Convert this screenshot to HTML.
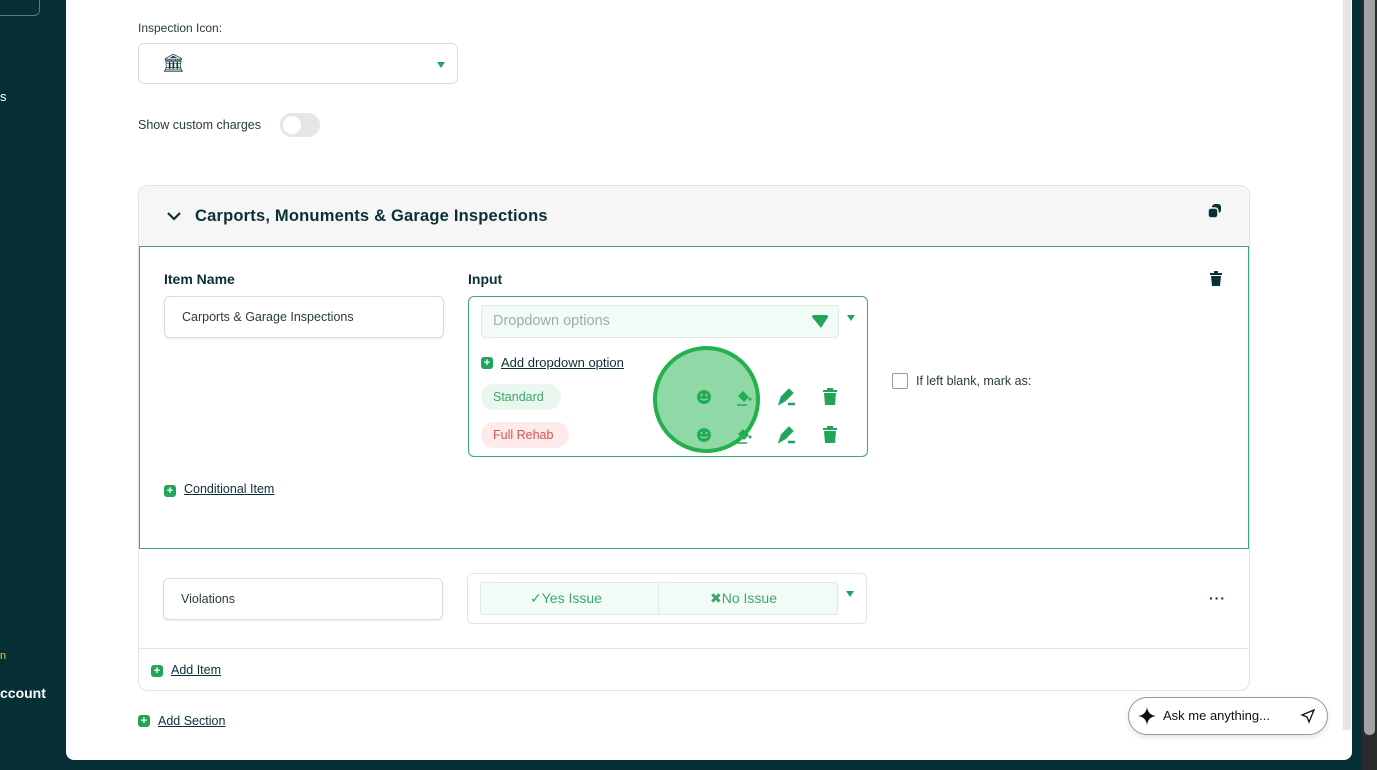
<!DOCTYPE html>
<html><head><meta charset="utf-8"><style>
*{box-sizing:border-box;margin:0;padding:0}
body{width:1377px;height:770px;overflow:hidden;background:#062f36;font-family:"Liberation Sans",sans-serif;position:relative;color:#0b2f36}
.abs{position:absolute}
.panel{left:66px;top:0;width:1286px;height:760px;background:#fff;border-radius:0 0 8px 8px}
.lbl{font-size:12px;color:#2a3b3f}
.inp{border:1px solid #dcdcdc;border-radius:6px;background:#fff}
.link{font-size:12.5px;color:#0b2f36;text-decoration:underline}
.plus{width:12px;height:12px;background:#22a55b;border-radius:3px;color:#fff;font-size:11px;line-height:12px;text-align:center;font-weight:bold}
.tri{width:0;height:0;border-left:4px solid transparent;border-right:4px solid transparent;border-top:6px solid #22a55b}
.g{fill:#22a55b}
</style></head><body>
<div class="abs" style="left:-10px;top:-10px;width:50px;height:26px;border:1px solid #5d7c80;border-radius:6px"></div>
<div class="abs" style="left:0;top:89px;color:#fff;font-size:13px">s</div>
<div class="abs" style="left:0;top:650px;color:#e6c84a;font-size:11px">n</div>
<div class="abs" style="left:0;top:685px;color:#fff;font-size:14px;font-weight:bold">ccount</div>
<div class="abs panel"></div>
<div class="abs" style="left:1343px;top:0;width:8px;height:730px;background:#e6e6e6"></div>
<div class="abs" style="left:1362px;top:0;width:15px;height:770px;background:#2b2b2b"></div>
<div class="abs" style="left:1364px;top:0;width:11px;height:735px;background:#a3a3a3;border-radius:0 0 5px 5px"></div>

<div class="abs lbl" style="left:138px;top:21px">Inspection Icon:</div>
<div class="abs inp" style="left:138px;top:43px;width:320px;height:41px"></div>
<div class="abs" style="left:162px;top:53px;font-size:18px">🏛</div>
<div class="abs tri" style="left:437px;top:62px"></div>
<div class="abs lbl" style="left:138px;top:118px;font-size:12.5px">Show custom charges</div>
<div class="abs" style="left:280px;top:113px;width:40px;height:24px;border-radius:12px;background:#e6e6e6"></div>
<div class="abs" style="left:283px;top:116px;width:18px;height:18px;border-radius:9px;background:#fff"></div>

<div class="abs" style="left:138px;top:185px;width:1112px;height:506px;border:1px solid #e3e3e3;border-radius:10px;background:#fff"></div>
<div class="abs" style="left:139px;top:186px;width:1110px;height:60px;background:#f6f6f6;border-radius:10px 10px 0 0"></div>
<svg class="abs" style="left:166px;top:210px" width="16" height="12"><path d="M2 3l6 6 6-6" stroke="#0b2f36" stroke-width="2.2" fill="none"/></svg>
<div class="abs" style="left:195px;top:207px;font-size:16.5px;font-weight:bold;letter-spacing:0.2px">Carports, Monuments &amp; Garage Inspections</div>
<svg class="abs" style="left:1207px;top:203px" width="16" height="16"><rect x="5" y="1" width="9" height="9" rx="3" fill="#0b2f36"/><rect x="1" y="5" width="10" height="10" rx="3" fill="#0b2f36" stroke="#f6f6f6" stroke-width="1.5"/></svg>

<div class="abs" style="left:139px;top:246px;width:1110px;height:303px;border:1px solid #3aa876"></div>
<div class="abs" style="left:164px;top:271px;font-size:14px;font-weight:bold">Item Name</div>
<div class="abs" style="left:468px;top:271px;font-size:14px;font-weight:bold">Input</div>
<svg class="abs" style="left:1209px;top:271px" width="14" height="16"><path d="M1 3h12M5 1h4" stroke="#0b2f36" stroke-width="2"/><path d="M2 5h10l-1 10H3z" fill="#0b2f36"/></svg>
<div class="abs inp" style="left:164px;top:296px;width:280px;height:42px;box-shadow:0 1px 2px rgba(0,0,0,.08)"></div>
<div class="abs" style="left:182px;top:310px;font-size:12.5px;color:#2a3b3f">Carports &amp; Garage Inspections</div>
<div class="abs" style="left:468px;top:296px;width:400px;height:161px;border:1px solid #3aa876;border-radius:6px"></div>
<div class="abs" style="left:481px;top:305px;width:358px;height:33px;background:#f2fbf5;border:1px solid #d9eee0;border-radius:4px"></div>
<div class="abs" style="left:493px;top:313px;font-size:14.5px;color:#a3aaa9">Dropdown options</div>
<svg class="abs" style="left:811px;top:314px" width="18" height="16"><path d="M1 3q0-2 2-2h12q2 0 2 2l-7 11z" class="g"/></svg>
<div class="abs tri" style="left:847px;top:315px"></div>
<div class="abs plus" style="left:481px;top:357px">+</div>
<div class="abs link" style="left:501px;top:355px;font-size:13px">Add dropdown option</div>
<div class="abs" style="left:481px;top:384px;width:80px;height:26px;background:#eaf7ef;border-radius:13px;color:#3aa86a;font-size:12.5px;line-height:26px;padding-left:12px">Standard</div>
<div class="abs" style="left:481px;top:422px;width:88px;height:26px;background:#fdeaea;border-radius:13px;color:#d9534f;font-size:12.5px;line-height:26px;padding-left:12px">Full Rehab</div>
<svg class="abs" style="left:690px;top:385px" width="160" height="62">
<circle cx="14" cy="12" r="7" class="g"/><circle cx="14" cy="50" r="7" class="g"/>
<circle cx="11.5" cy="10" r="1" fill="#fff"/><circle cx="16.5" cy="10" r="1" fill="#fff"/>
<circle cx="11.5" cy="48" r="1" fill="#fff"/><circle cx="16.5" cy="48" r="1" fill="#fff"/>
<path d="M10.5 13.5q3.5 3 7 0M10.5 51.5q3.5 3 7 0" stroke="#fff" stroke-width="1.2" fill="none"/>
<path d="M48 11l5-5 6 6-5 5z" class="g"/><circle cx="60" cy="14" r="1.5" class="g"/><path d="M47 20h10" stroke="#22a55b" stroke-width="1.5"/>
<path d="M48 49l5-5 6 6-5 5z" class="g"/><circle cx="60" cy="52" r="1.5" class="g"/><path d="M47 58h10" stroke="#22a55b" stroke-width="1.5"/>
<path d="M90 18l2-6 7-7 3 3-7 7z M98 19h7" stroke="#22a55b" stroke-width="2.5" fill="#22a55b"/>
<path d="M90 56l2-6 7-7 3 3-7 7z M98 57h7" stroke="#22a55b" stroke-width="2.5" fill="#22a55b"/>
<path d="M133 6h14M137 4h6" stroke="#22a55b" stroke-width="2"/><path d="M134 8h12l-1 12h-10z" class="g"/>
<path d="M133 44h14M137 42h6" stroke="#22a55b" stroke-width="2"/><path d="M134 46h12l-1 12h-10z" class="g"/>
</svg>
<div class="abs" style="left:653px;top:346px;width:107px;height:107px;border-radius:50%;background:rgba(34,180,80,.5);border:4px solid #22b14c"></div>
<div class="abs" style="left:892px;top:373px;width:16px;height:16px;border:1px solid #9a9a9a;border-radius:2px"></div>
<div class="abs" style="left:916px;top:374px;font-size:12.5px;color:#2a3b3f">If left blank, mark as:</div>
<div class="abs plus" style="left:164px;top:485px">+</div>
<div class="abs link" style="left:184px;top:482px">Conditional Item</div>

<div class="abs inp" style="left:163px;top:578px;width:280px;height:42px;box-shadow:0 1px 2px rgba(0,0,0,.08)"></div>
<div class="abs" style="left:181px;top:592px;font-size:12.5px;color:#2a3b3f">Violations</div>
<div class="abs" style="left:467px;top:573px;width:400px;height:51px;border:1px solid #e3e3e3;border-radius:6px"></div>
<div class="abs" style="left:480px;top:582px;width:358px;height:33px;background:#f2fbf5;border:1px solid #d9eee0;border-radius:3px"></div>
<div class="abs" style="left:658px;top:582px;width:1px;height:33px;background:#d9eee0"></div>
<div class="abs" style="left:530px;top:590px;font-size:14px;color:#3aa86a">✓Yes Issue</div>
<div class="abs" style="left:710px;top:590px;font-size:14px;color:#3aa86a">✖No Issue</div>
<div class="abs tri" style="left:846px;top:591px"></div>
<div class="abs" style="left:1209px;top:590px;font-size:14px;font-weight:bold;letter-spacing:1px">···</div>
<div class="abs" style="left:139px;top:648px;width:1110px;height:1px;background:#e3e3e3"></div>
<div class="abs plus" style="left:151px;top:665px">+</div>
<div class="abs link" style="left:171px;top:663px">Add Item</div>
<div class="abs plus" style="left:138px;top:715px">+</div>
<div class="abs link" style="left:158px;top:714px">Add Section</div>

<div class="abs" style="left:1128px;top:697px;width:200px;height:38px;border:1px solid #999;border-radius:19px;background:#fff;box-shadow:0 2px 6px rgba(0,0,0,.12)"></div>
<svg class="abs" style="left:1138px;top:707px" width="18" height="18"><path d="M9 0q1 8 9 9q-8 1-9 9q-1-8-9-9q8-1 9-9z" fill="#111"/></svg>
<div class="abs" style="left:1163px;top:708px;font-size:13px;color:#111">Ask me anything...</div>
<svg class="abs" style="left:1300px;top:708px" width="16" height="16"><path d="M2 7l12-5-5 12-2-5z" stroke="#111" stroke-width="1.3" fill="none"/></svg>
</body></html>
